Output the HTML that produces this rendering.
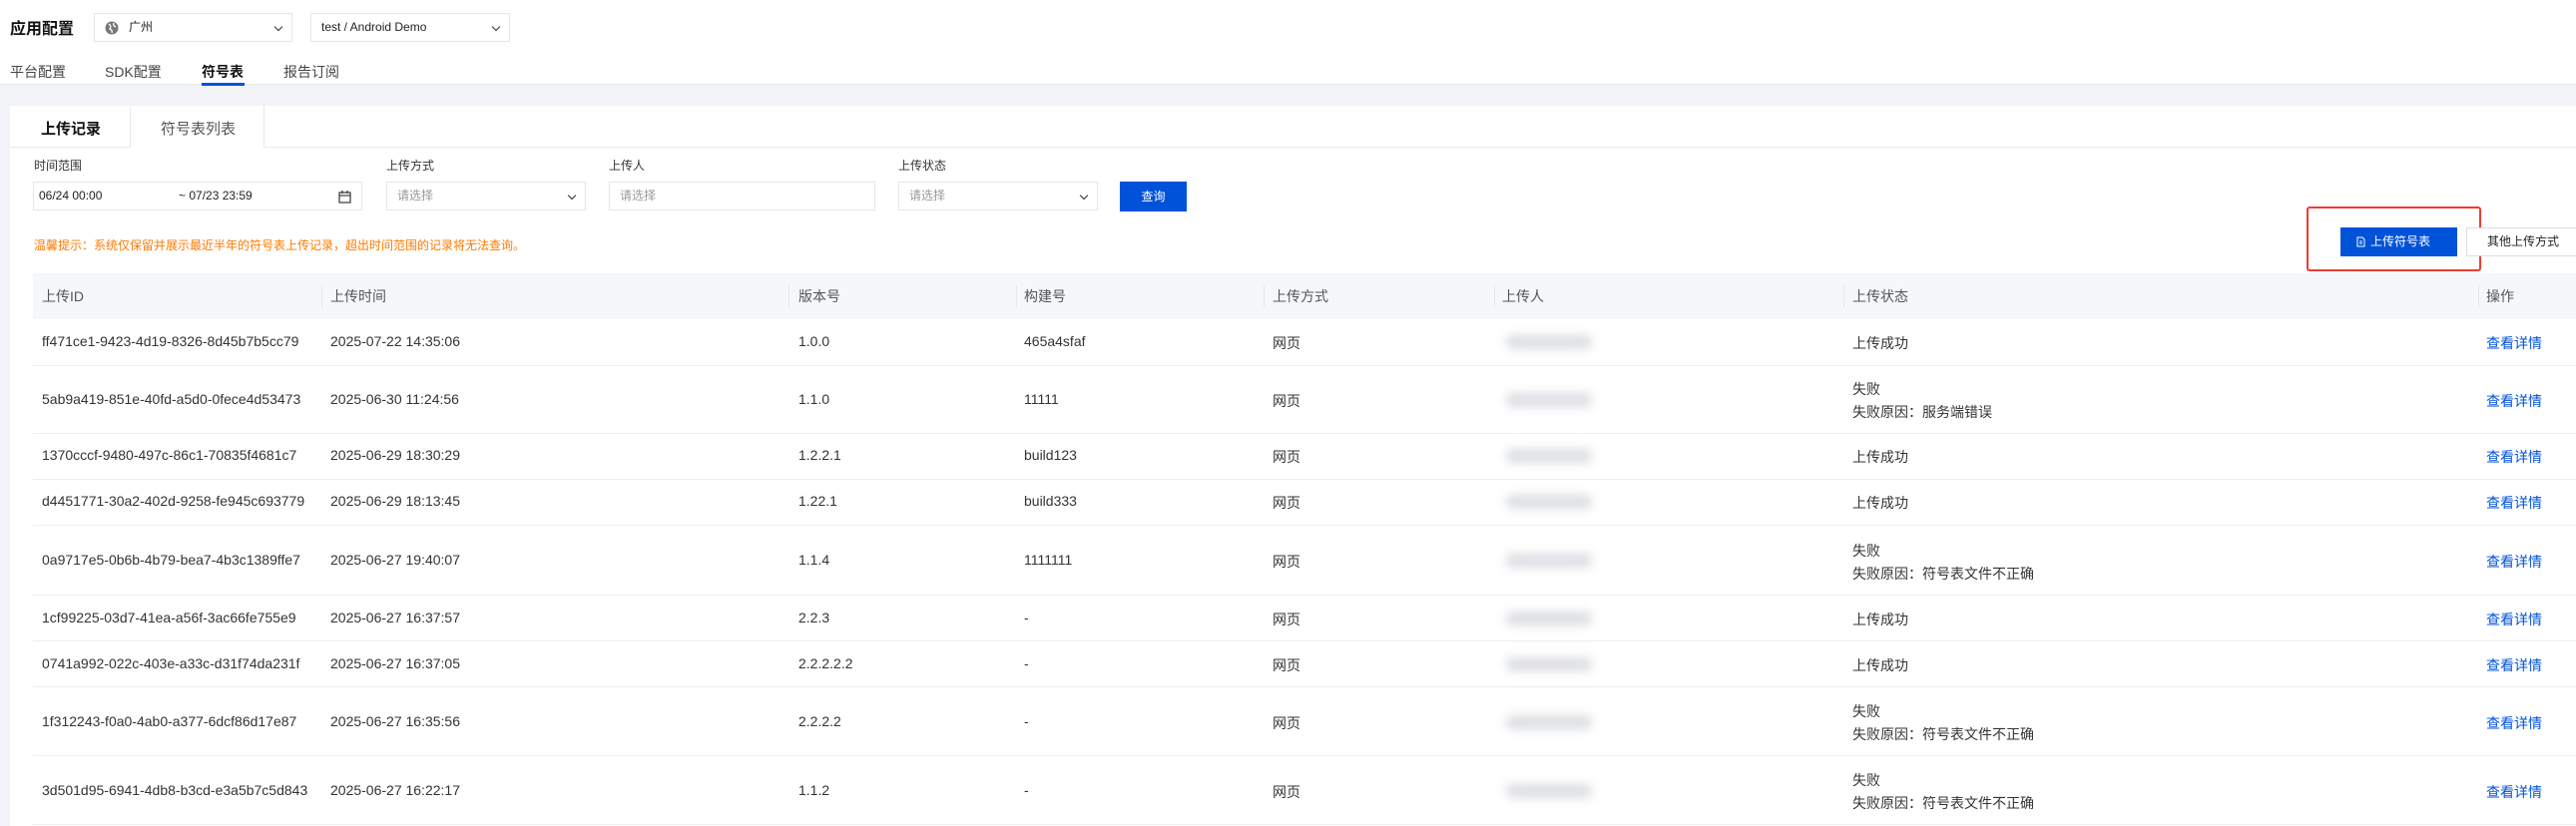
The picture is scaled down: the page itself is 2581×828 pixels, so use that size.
<!DOCTYPE html>
<html><head><meta charset="utf-8"><style>
*{box-sizing:border-box;margin:0;padding:0}
body{width:2581px;height:828px;overflow:hidden;background:#f2f3f7;font-family:"Liberation Sans","Noto Sans CJK SC",sans-serif;color:#222;position:relative}
.a{position:absolute;white-space:nowrap}
.sel{position:absolute;border:1px solid #e3e6eb;background:#fff;height:29px;font-size:12px;line-height:27px;padding-left:10px}
.chev{position:absolute;right:10px;top:10px;width:6px;height:6px;border-right:1.3px solid #333;border-bottom:1.3px solid #333;transform:rotate(45deg)}
.lbl{position:absolute;top:157px;font-size:12px;color:#333}
.ph{color:#999}
.th{position:absolute;top:274px;height:46px;font-size:14px;line-height:46px;color:#555}
.dv{position:absolute;top:286px;width:1px;height:22px;background:#e3e6eb}
.row{position:absolute;left:33px;right:0;border-bottom:1px solid #eceef2}
.c{position:absolute;font-size:14px;color:#333;white-space:nowrap}
.blur{position:absolute;left:1509px;width:86px;height:14px;background:#dcdee2;filter:blur(5px);border-radius:6px}
.lk{position:absolute;left:2491px;font-size:14px;color:#0052d9}
</style></head><body>
<div class="a" style="left:0;top:0;width:2581px;height:85px;background:#fff;border-bottom:1px solid #e6e8ec"></div>
<div class="a" style="left:10px;top:15px;font-size:16px;font-weight:bold;color:#111">应用配置</div>
<div class="sel" style="left:94px;top:13px;width:199px;padding-left:34px;font-size:12px"><svg style="position:absolute;left:10px;top:7px" width="14" height="14" viewBox="0 0 14 14"><circle cx="7" cy="7" r="6.5" fill="#777"/><path d="M4 3 Q7 5 5 8 Q8 9 7 12 M9 2 Q8 5 11 6" stroke="#fff" stroke-width="1.3" fill="none"/></svg>广州<span class="chev"></span></div>
<div class="sel" style="left:311px;top:13px;width:200px">test / Android Demo<span class="chev"></span></div>
<div class="a" style="left:10px;top:62px;font-size:14px;color:#444">平台配置</div>
<div class="a" style="left:105px;top:62px;font-size:14px;color:#444">SDK配置</div>
<div class="a" style="left:202px;top:62px;font-size:14px;font-weight:bold;color:#111">符号表</div>
<div class="a" style="left:202px;top:83px;width:43px;height:3px;background:#0052d9"></div>
<div class="a" style="left:284px;top:62px;font-size:14px;color:#444">报告订阅</div>

<div class="a" style="left:10px;top:106px;width:2571px;height:722px;background:#fff"></div>
<div class="a" style="left:10px;top:147px;width:2571px;height:1px;background:#e6e8ec"></div>
<div class="a" style="left:130px;top:106px;width:135px;height:42px;border-left:1px solid #e6e8ec;border-right:1px solid #e6e8ec;background:#fff"></div>
<div class="a" style="left:41px;top:118px;font-size:15px;font-weight:bold;color:#111">上传记录</div>
<div class="a" style="left:161px;top:118px;font-size:15px;color:#555">符号表列表</div>

<div class="lbl" style="left:34px">时间范围</div>
<div class="lbl" style="left:387px">上传方式</div>
<div class="lbl" style="left:610px">上传人</div>
<div class="lbl" style="left:900px">上传状态</div>
<div class="sel" style="left:33px;top:182px;width:330px;padding-left:5px;color:#222">06/24 00:00<span style="position:absolute;left:145px">~ 07/23 23:59</span><svg style="position:absolute;left:305px;top:7px" width="13" height="14" viewBox="0 0 13 14"><rect x="1" y="3" width="11" height="10" fill="none" stroke="#444" stroke-width="1.3"/><path d="M1 6h11M4 1v3M9 1v3" stroke="#444" stroke-width="1.3"/></svg></div>
<div class="sel ph" style="left:387px;top:182px;width:200px">请选择<span class="chev"></span></div>
<div class="sel ph" style="left:610px;top:182px;width:267px">请选择</div>
<div class="sel ph" style="left:900px;top:182px;width:200px">请选择<span class="chev"></span></div>
<div class="a" style="left:1122px;top:182px;width:67px;height:30px;background:#0052d9;color:#fff;font-size:12px;line-height:30px;text-align:center">查询</div>

<div class="a" style="left:34px;top:237px;font-size:12px;color:#ff7a00">温馨提示：系统仅保留并展示最近半年的符号表上传记录，超出时间范围的记录将无法查询。</div>
<div class="a" style="left:2311px;top:207px;width:175px;height:65px;border:2px solid #ee3b30;border-radius:3px"></div>
<div class="a" style="left:2345px;top:228px;width:117px;height:29px;background:#0052d9;color:#fff;font-size:12px;line-height:29px;padding-left:30px"><svg style="position:absolute;left:16px;top:9px" width="9" height="11" viewBox="0 0 9 11"><path d="M1 1h5l2 2v7H1z M3 5h3M3 7h3" fill="none" stroke="#fff" stroke-width="1"/></svg>上传符号表</div>
<div class="a" style="left:2471px;top:228px;width:120px;height:29px;border:1px solid #dcdfe4;background:#fff;font-size:12px;line-height:27px;padding-left:20px">其他上传方式</div>

<div class="a" style="left:33px;top:274px;width:2548px;height:46px;background:#f5f7fa"></div>
<div class="th" style="left:42px">上传ID</div>
<div class="dv" style="left:322px"></div><div class="th" style="left:331px">上传时间</div>
<div class="dv" style="left:790px"></div><div class="th" style="left:800px">版本号</div>
<div class="dv" style="left:1018px"></div><div class="th" style="left:1026px">构建号</div>
<div class="dv" style="left:1266px"></div><div class="th" style="left:1275px">上传方式</div>
<div class="dv" style="left:1497px"></div><div class="th" style="left:1505px">上传人</div>
<div class="dv" style="left:1847px"></div><div class="th" style="left:1856px">上传状态</div>
<div class="dv" style="left:2483px"></div><div class="th" style="left:2491px">操作</div>

<div class="row" style="top:320px;height:47px"></div>
<div class="row" style="top:367px;height:68px"></div>
<div class="row" style="top:435px;height:46px"></div>
<div class="row" style="top:481px;height:46px"></div>
<div class="row" style="top:527px;height:70px"></div>
<div class="row" style="top:597px;height:46px"></div>
<div class="row" style="top:643px;height:46px"></div>
<div class="row" style="top:689px;height:69px"></div>
<div class="row" style="top:758px;height:69px"></div>

<div class="c" style="left:42px;top:334px">ff471ce1-9423-4d19-8326-8d45b7b5cc79</div><div class="c" style="left:331px;top:334px">2025-07-22 14:35:06</div><div class="c" style="left:800px;top:334px">1.0.0</div><div class="c" style="left:1026px;top:334px">465a4sfaf</div><div class="c" style="left:1275px;top:334px">网页</div><div class="blur" style="top:336px"></div><div class="c" style="left:1856px;top:334px">上传成功</div><div class="lk" style="top:334px">查看详情</div>

<div class="c" style="left:42px;top:392px">5ab9a419-851e-40fd-a5d0-0fece4d53473</div><div class="c" style="left:331px;top:392px">2025-06-30 11:24:56</div><div class="c" style="left:800px;top:392px">1.1.0</div><div class="c" style="left:1026px;top:392px">11111</div><div class="c" style="left:1275px;top:392px">网页</div><div class="blur" style="top:394px"></div><div class="c" style="left:1856px;top:380px">失败</div><div class="c" style="left:1856px;top:403px">失败原因：服务端错误</div><div class="lk" style="top:392px">查看详情</div>

<div class="c" style="left:42px;top:448px">1370cccf-9480-497c-86c1-70835f4681c7</div><div class="c" style="left:331px;top:448px">2025-06-29 18:30:29</div><div class="c" style="left:800px;top:448px">1.2.2.1</div><div class="c" style="left:1026px;top:448px">build123</div><div class="c" style="left:1275px;top:448px">网页</div><div class="blur" style="top:450px"></div><div class="c" style="left:1856px;top:448px">上传成功</div><div class="lk" style="top:448px">查看详情</div>

<div class="c" style="left:42px;top:494px">d4451771-30a2-402d-9258-fe945c693779</div><div class="c" style="left:331px;top:494px">2025-06-29 18:13:45</div><div class="c" style="left:800px;top:494px">1.22.1</div><div class="c" style="left:1026px;top:494px">build333</div><div class="c" style="left:1275px;top:494px">网页</div><div class="blur" style="top:496px"></div><div class="c" style="left:1856px;top:494px">上传成功</div><div class="lk" style="top:494px">查看详情</div>

<div class="c" style="left:42px;top:553px">0a9717e5-0b6b-4b79-bea7-4b3c1389ffe7</div><div class="c" style="left:331px;top:553px">2025-06-27 19:40:07</div><div class="c" style="left:800px;top:553px">1.1.4</div><div class="c" style="left:1026px;top:553px">1111111</div><div class="c" style="left:1275px;top:553px">网页</div><div class="blur" style="top:555px"></div><div class="c" style="left:1856px;top:542px">失败</div><div class="c" style="left:1856px;top:565px">失败原因：符号表文件不正确</div><div class="lk" style="top:553px">查看详情</div>

<div class="c" style="left:42px;top:611px">1cf99225-03d7-41ea-a56f-3ac66fe755e9</div><div class="c" style="left:331px;top:611px">2025-06-27 16:37:57</div><div class="c" style="left:800px;top:611px">2.2.3</div><div class="c" style="left:1026px;top:611px">-</div><div class="c" style="left:1275px;top:611px">网页</div><div class="blur" style="top:613px"></div><div class="c" style="left:1856px;top:611px">上传成功</div><div class="lk" style="top:611px">查看详情</div>

<div class="c" style="left:42px;top:657px">0741a992-022c-403e-a33c-d31f74da231f</div><div class="c" style="left:331px;top:657px">2025-06-27 16:37:05</div><div class="c" style="left:800px;top:657px">2.2.2.2.2</div><div class="c" style="left:1026px;top:657px">-</div><div class="c" style="left:1275px;top:657px">网页</div><div class="blur" style="top:659px"></div><div class="c" style="left:1856px;top:657px">上传成功</div><div class="lk" style="top:657px">查看详情</div>

<div class="c" style="left:42px;top:715px">1f312243-f0a0-4ab0-a377-6dcf86d17e87</div><div class="c" style="left:331px;top:715px">2025-06-27 16:35:56</div><div class="c" style="left:800px;top:715px">2.2.2.2</div><div class="c" style="left:1026px;top:715px">-</div><div class="c" style="left:1275px;top:715px">网页</div><div class="blur" style="top:717px"></div><div class="c" style="left:1856px;top:703px">失败</div><div class="c" style="left:1856px;top:726px">失败原因：符号表文件不正确</div><div class="lk" style="top:715px">查看详情</div>

<div class="c" style="left:42px;top:784px">3d501d95-6941-4db8-b3cd-e3a5b7c5d843</div><div class="c" style="left:331px;top:784px">2025-06-27 16:22:17</div><div class="c" style="left:800px;top:784px">1.1.2</div><div class="c" style="left:1026px;top:784px">-</div><div class="c" style="left:1275px;top:784px">网页</div><div class="blur" style="top:786px"></div><div class="c" style="left:1856px;top:772px">失败</div><div class="c" style="left:1856px;top:795px">失败原因：符号表文件不正确</div><div class="lk" style="top:784px">查看详情</div>
</body></html>
